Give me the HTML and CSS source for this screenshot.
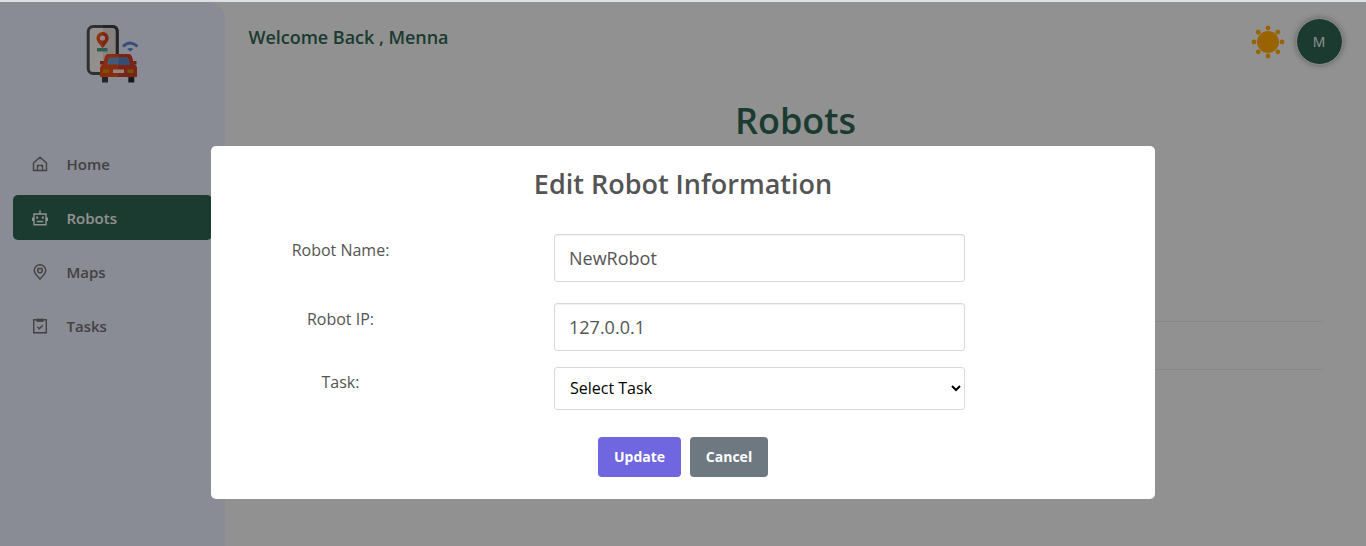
FILE: index.html
```html
<!DOCTYPE html>
<html lang="en">
<head>
<meta charset="utf-8">
<title>Robots</title>
<link rel="stylesheet" href="styles.css">
</head>
<body>
<div class="app">
  <aside class="sidebar">
    <svg class="logo" viewBox="0 0 52 58">
      <rect x="2.200" y="1.500" width="29" height="47" rx="5" fill="#f5eeea" stroke="#4e5254" stroke-width="3"/>
      <path d="M17 3h11q2.700 0 2.700 3v38q0 3-2.700 3H17z" fill="#e2d8d5"/>
      <path d="M17 1.500h9.500q4.700 0 4.700 5V30" fill="none" stroke="#3b3e40" stroke-width="3"/>
      <path d="M11 23h10.500v3.500H11z" fill="#4c9d86"/>
      <path d="M16.500 23C13 18.500 10.500 16.500 10.500 13a6 6 0 0 1 12 0C22.500 16.500 20 18.500 16.500 23z" fill="#e9571b"/>
      <path d="M16.500 7a6 6 0 0 1 6 6c0 3.500-2.500 5.500-6 10z" fill="#cf4124"/>
      <circle cx="16.500" cy="13" r="2.600" fill="#f0e6e3"/>
      <path d="M37 21.500q7-7 14.500 0" fill="none" stroke="#5b83cc" stroke-width="3"/>
      <path d="M41 24q3.200-2 6.400 0l-3.200 2.500z" fill="#5b83cc"/>
      <path d="M16 51h6v6.500h-6z" fill="#3b3e40"/><path d="M42.300 51h6v6.500h-6z" fill="#292b2d"/>
      <path d="M14 36h6v3.500h-6zM44.500 36h6v3.500h-6z" fill="#bd3630"/>
      <path d="M21.500 29h21q2.500 0 3.300 2.500L48 39q3 1.500 3 5v8H14v-8q0-3.500 3-5l2-7.500q.8-2.500 2.500-2.500z" fill="#e44c19"/>
      <path d="M32.500 29h10q2.500 0 3.300 2.500L48 39q3 1.500 3 5v8H32.500z" fill="#cc3d27"/>
      <path d="M23.500 32.500h17q1.500 0 2 2l1.500 5H21l1-5q.5-2 1.500-2z" fill="#6f98c9"/>
      <path d="M32.500 32.500h8q1.500 0 2 2l1.500 5H32.500z" fill="#5880c4"/>
      <path d="M17 44.500h6v3.500h-6zM41.500 44.500h6v3.500h-6z" fill="#c98b0b"/>
      <path d="M27 44.500h11v3.500H27z" fill="#f0dfdb"/>
    </svg>
    <nav class="nav">
      <a class="nav-item"><svg class="nav-icon" viewBox="0 0 16 16"><path d="M1.500 7 8 1.200 14.500 7V14.500h-13zM5.500 14.500V9.500h5v5"/></svg>Home</a>
      <a class="nav-item active"><svg class="nav-icon" viewBox="0 0 16 16"><path d="M2 4h12v10.700H2zM8 4V.3M.6 7.500v3.500M15.400 7.500v3.500M4.800 11.500h6.400"/><path d="M5.200 6.500v2.200M10.800 6.500v2.200" stroke-width="2"/></svg>Robots</a>
      <a class="nav-item"><svg class="nav-icon" viewBox="0 0 16 16"><path d="M8 15C5 12 2.300 9.500 2.300 6.500a5.700 5.700 0 0 1 11.400 0C13.700 9.500 11 12 8 15z"/><circle cx="8" cy="6.500" r="2.300"/></svg>Maps</a>
      <a class="nav-item"><svg class="nav-icon" viewBox="0 0 16 16"><path d="M1.700 1.700h12.600v13H1.700zM5.400 8.800l2 2 3.400-3.600"/><path d="M4.500 2.300h7" stroke-width="3.200"/></svg>Tasks</a>
    </nav>
  </aside>
  <main class="main">
    <header class="topbar">
      <div class="welcome">Welcome Back , Menna</div>
      <div class="tools">
        <svg class="sun" viewBox="0 0 34 34"><circle cx="17" cy="17" r="11"/><circle cx="17" cy="3" r="2.400"/><circle cx="17" cy="31" r="2.400"/><circle cx="3" cy="17" r="2.400"/><circle cx="31" cy="17" r="2.400"/><circle cx="7.200" cy="7.200" r="2.400"/><circle cx="26.800" cy="7.200" r="2.400"/><circle cx="7.200" cy="26.800" r="2.400"/><circle cx="26.800" cy="26.800" r="2.400"/></svg>
        <div class="avatar">M</div>
      </div>
    </header>
    <h1 class="page-title">Robots</h1>
    <div class="table"><div class="table-row"></div></div>
  </main>
</div>
<div class="overlay">
  <form class="modal">
    <h2 class="modal-title">Edit Robot Information</h2>
    <div class="field"><label class="label" for="name">Robot Name:</label><input class="control" id="name" value="NewRobot"></div>
    <div class="field field-ip"><label class="label" for="ip">Robot IP:</label><input class="control" id="ip" value="127.0.0.1"></div>
    <div class="field field-task"><label class="label" for="task">Task:</label><select class="control select" id="task"><option>Select Task</option></select></div>
    <div class="actions"><button type="button" class="btn update">Update</button><button type="button" class="btn cancel">Cancel</button></div>
  </form>
</div>
</body>
</html>
```
FILE: styles.css
```css
* { box-sizing: border-box; }
body { margin: 0; height: 546px; overflow: hidden; background: #f2f2f2; border-top: 2px solid #dee1e3; font-family: "Open Sans", sans-serif; }
.app { display: flex; height: 544px; }
.sidebar { width: 225px; border-top-right-radius: 18px; background: #e5e8f8; padding: 23px 0 0 13px; }
.logo { display: block; width: 52px; height: 58px; margin-left: 73px; }
.nav { display: flex; flex-direction: column; gap: 9px; margin-top: 58px; }
.nav-item { display: flex; align-items: center; gap: 19px; width: 199px; height: 45px; padding-left: 18.5px; border-radius: 5px; color: #6e6e6e; font-size: 15px; font-weight: 600; }
.nav-item.active { background: #2f6350; color: #f2f2f2; }
.nav-icon { width: 16px; height: 16px; fill: none; stroke: currentColor; stroke-width: 1.4; }
.main { flex: 1; }
.topbar { display: flex; justify-content: space-between; height: 81px; padding: 16px 23px 0 23.500px; }
.welcome { margin-top: 7px; color: #2f6350; font-size: 18px; font-weight: 600; line-height: 25px; letter-spacing: -.03px; }
.tools { display: flex; align-items: center; gap: 12px; height: 47px; }
.sun { width: 34px; height: 34px; margin-right: -.5px; fill: #ffa700; }
.avatar { display: flex; align-items: center; justify-content: center; width: 47px; height: 47px; padding-right: 1px; border: 1px solid #eee; border-radius: 50%; background: #2f6350; color: #f2f2f2; font: 14px "Open Sans", sans-serif; box-shadow: 0 0 6px rgba(0, 0, 0, .35); }
.page-title { margin: 11px 0 0; color: #2f6350; font-size: 36px; font-weight: 600; line-height: 54px; text-align: center; }
.table { margin: 173px 43px 0; border-top: 1px solid #e2e2e2; border-bottom: 1px solid #e2e2e2; }
.table-row { height: 47px; }
.overlay { position: absolute; inset: 2px 0 0; background: rgba(0, 0, 0, .4); }
.modal { width: 944px; height: 353px; margin: 144px 0 0 211px; padding: 17px 0 0; border-radius: 5px; background: #fff; color: #545454; }
.modal-title { margin: 0 0 30px; font-size: 27px; font-weight: 600; line-height: 41px; text-align: center; }
.field { display: flex; height: 48px; margin-bottom: 21px; }
.field-ip { margin-bottom: 16px; }
.label { width: 259px; margin-right: 84px; padding-top: 4px; font-size: 16px; line-height: 24px; text-align: center; }
.control { width: 411px; height: 48px; padding: 0 14px; border: 1px solid #d9d9d9; border-radius: 3px; background: #fff; box-shadow: inset 0 1px 1px rgba(0, 0, 0, .06); color: #545454; font: 18px "Open Sans", sans-serif; }
.select { height: 43px; padding: 0 12px 2px 11px; color: #000; font-size: 16px; box-shadow: none; }
.field-task { height: 43px; margin-bottom: 27px; }
.field-task .label { padding-top: 3px; }
.actions { display: flex; justify-content: center; gap: 9px; }
.btn { height: 40px; padding: 0 0 2px; border: 0; border-radius: 4px; color: #fff; font: 700 14px "Open Sans", sans-serif; }
.update { width: 83px; background: #7066e0; }
.cancel { width: 78px; background: #6e7881; }
```
